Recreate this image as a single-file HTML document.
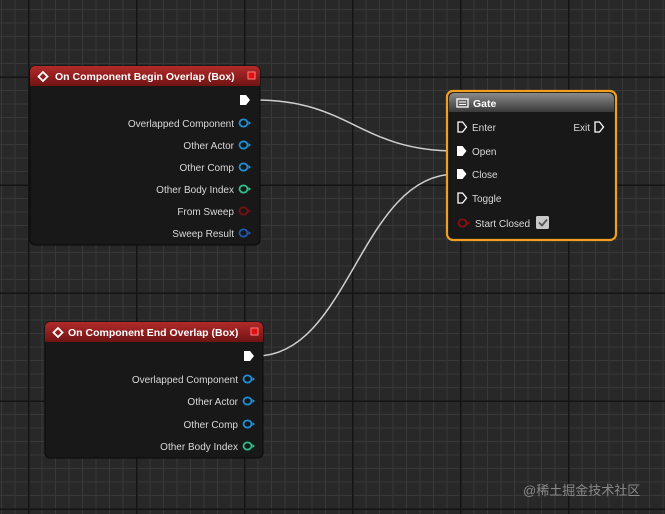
<!DOCTYPE html>
<html><head><meta charset="utf-8"><style>
html,body{margin:0;padding:0}
body{width:665px;height:514px;overflow:hidden;position:relative;background-color:#282828;
background-image:
linear-gradient(90deg,#141414 1.5px,transparent 1.5px),
linear-gradient(0deg,#141414 1.5px,transparent 1.5px),
linear-gradient(90deg,#383838 1px,transparent 1px),
linear-gradient(0deg,#383838 1px,transparent 1px);
background-size:108px 108px,108px 108px,13.5px 13.5px,13.5px 13.5px;
background-position:28px 0,0 78px,1px 0,0 10px;}
svg{position:absolute;left:0;top:0}
text{font-family:"Liberation Sans",sans-serif;font-size:10px;fill:#d8d8d8}
.t{font-weight:bold;fill:#fff;font-size:10.5px}
</style></head><body>
<svg width="665" height="514" viewBox="0 0 665 514">
<defs>
<linearGradient id="red" x1="0" y1="0" x2="0" y2="1"><stop offset="0" stop-color="#b42a2a"/><stop offset="1" stop-color="#6e1414"/></linearGradient>
<linearGradient id="gray" x1="0" y1="0" x2="0" y2="1"><stop offset="0" stop-color="#8a8a8a"/><stop offset="1" stop-color="#3a3a3a"/></linearGradient>
<g id="pin"><path d="M-4.5,0a4,3.6 0 1,0 8,0a4,3.6 0 1,0 -8,0" fill="none" stroke-width="1.8"/><path d="M4.5,-2l2.5,2l-2.5,2z" stroke="none"/></g>
</defs>
<path d="M256,100 C350,100 360,151 456,151" fill="none" stroke="#cfcfcf" stroke-width="1.5"/>
<path d="M256,356 C350,356 360,174 456,174" fill="none" stroke="#cfcfcf" stroke-width="1.5"/>

<rect x="30" y="66" width="230" height="179" rx="5" fill="#181818" stroke="#0a0a0a"/>
<path d="M35,66h220a5,5 0 0 1 5,5v15h-230v-15a5,5 0 0 1 5,-5z" fill="url(#red)"/>
<path d="M43,72l4.5,4.5l-4.5,4.5l-4.5,-4.5z" fill="none" stroke="#fff" stroke-width="1.8"/>
<text class="t" x="55" y="80">On Component Begin Overlap (Box)</text>
<rect x="248" y="72" width="7" height="7" fill="#e01010" stroke="#ff8080" stroke-width="1"/>
<path d="M240,95h6l4,5l-4,5h-6z" fill="#fff"/>
<text x="234" y="127" text-anchor="end">Overlapped Component</text>
<text x="234" y="149" text-anchor="end">Other Actor</text>
<text x="234" y="171" text-anchor="end">Other Comp</text>
<text x="234" y="193" text-anchor="end">Other Body Index</text>
<text x="234" y="215" text-anchor="end">From Sweep</text>
<text x="234" y="237" text-anchor="end">Sweep Result</text>
<use href="#pin" x="244" y="123" stroke="#1e90d8" fill="#1e90d8"/>
<use href="#pin" x="244" y="145" stroke="#1e90d8" fill="#1e90d8"/>
<use href="#pin" x="244" y="167" stroke="#1e90d8" fill="#1e90d8"/>
<use href="#pin" x="244" y="189" stroke="#2ec08c" fill="#2ec08c"/>
<use href="#pin" x="244" y="211" stroke="#7a1010" fill="#7a1010"/>
<use href="#pin" x="244" y="233" stroke="#1f5ab0" fill="#1f5ab0"/>

<rect x="45" y="322" width="218" height="136" rx="5" fill="#181818" stroke="#0a0a0a"/>
<path d="M50,322h208a5,5 0 0 1 5,5v15h-218v-15a5,5 0 0 1 5,-5z" fill="url(#red)"/>
<path d="M58,328l4.5,4.5l-4.5,4.5l-4.5,-4.5z" fill="none" stroke="#fff" stroke-width="1.8"/>
<text class="t" x="68" y="336">On Component End Overlap (Box)</text>
<rect x="251" y="328" width="7" height="7" fill="#e01010" stroke="#ff8080" stroke-width="1"/>
<path d="M244,351h6l4,5l-4,5h-6z" fill="#fff"/>
<text x="238" y="383" text-anchor="end">Overlapped Component</text>
<text x="238" y="405" text-anchor="end">Other Actor</text>
<text x="238" y="428" text-anchor="end">Other Comp</text>
<text x="238" y="450" text-anchor="end">Other Body Index</text>
<use href="#pin" x="248" y="379" stroke="#1e90d8" fill="#1e90d8"/>
<use href="#pin" x="248" y="401" stroke="#1e90d8" fill="#1e90d8"/>
<use href="#pin" x="248" y="424" stroke="#1e90d8" fill="#1e90d8"/>
<use href="#pin" x="248" y="446" stroke="#2ec08c" fill="#2ec08c"/>

<rect x="447" y="91" width="169" height="149" rx="6" fill="#181818" stroke="#f0a020" stroke-width="2.2"/>
<path d="M454,93h155a5,5 0 0 1 5,5v14h-165v-14a5,5 0 0 1 5,-5z" fill="url(#gray)"/>
<rect x="457" y="99" width="11" height="8" fill="none" stroke="#fff" stroke-width="1.3"/>
<path d="M459,102h7M459,104.5h7" stroke="#fff" stroke-width="1"/>
<text class="t" x="473" y="107">Gate</text>
<path d="M458,122h4.5l4,5l-4,5h-4.5z" fill="none" stroke="#fff" stroke-width="1.3"/>
<text x="472" y="131">Enter</text>
<text x="590" y="131" text-anchor="end">Exit</text>
<path d="M595,122h4.5l4,5l-4,5h-4.5z" fill="none" stroke="#fff" stroke-width="1.3"/>
<path d="M457,146h5.5l4,5l-4,5h-5.5z" fill="#fff"/>
<text x="472" y="155">Open</text>
<path d="M457,169h5.5l4,5l-4,5h-5.5z" fill="#fff"/>
<text x="472" y="178">Close</text>
<path d="M458,193h4.5l4,5l-4,5h-4.5z" fill="none" stroke="#fff" stroke-width="1.3"/>
<text x="472" y="202">Toggle</text>
<use href="#pin" x="463" y="223" stroke="#8a1010" fill="#8a1010"/>
<text x="475" y="227">Start Closed</text>
<rect x="536" y="216" width="13" height="13" rx="1.5" fill="#c8c8c8"/>
<path d="M539,222.5l3,3l5,-6" fill="none" stroke="#555" stroke-width="1.8"/>

<text x="523" y="495" style="font-size:13px;fill:#8a8a8a;font-family:'Liberation Sans','Noto Sans CJK SC',sans-serif">@稀土掘金技术社区</text>
</svg>
</body></html>
